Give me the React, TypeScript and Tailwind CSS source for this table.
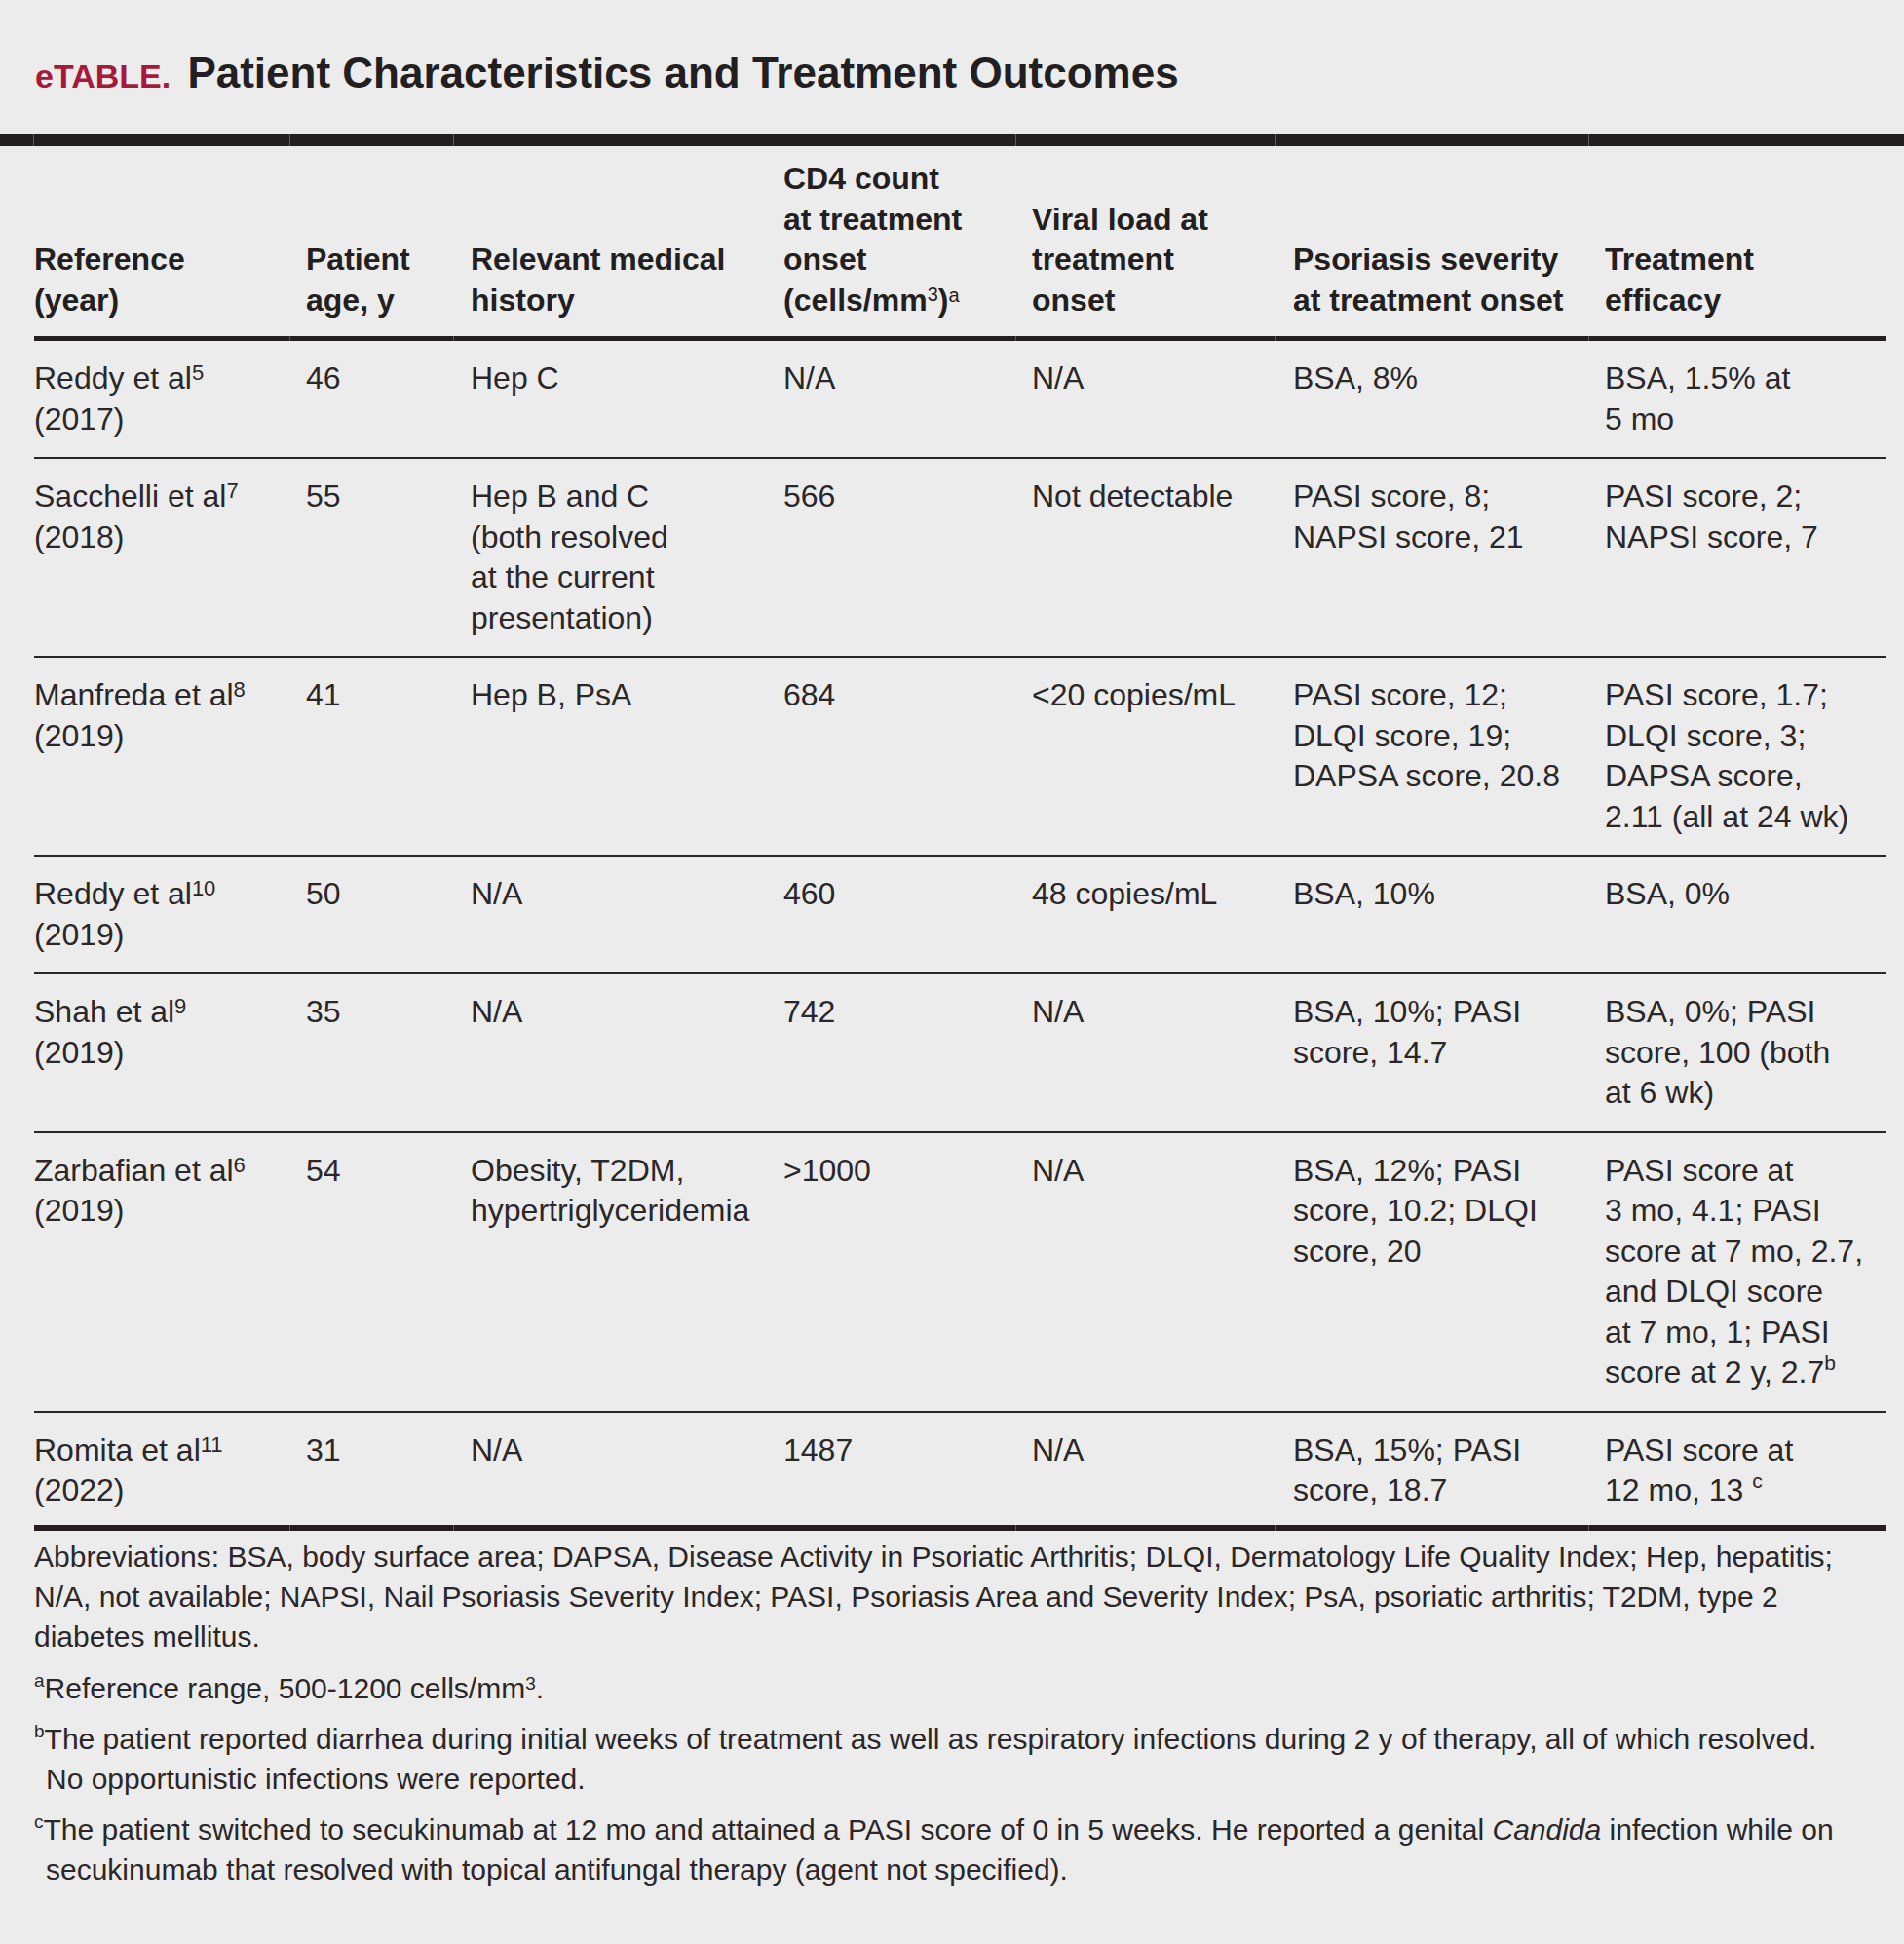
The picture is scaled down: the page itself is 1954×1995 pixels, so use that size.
import React from "react";
import clsx from "clsx";

type Line = React.ReactNode;

function Sup({ children, className }: { children: React.ReactNode; className?: string }) {
  return <sup className={clsx("font-normal", className)}>{children}</sup>;
}

// body superscripts
const Ref = ({ n }: { n: string }) => <Sup className="text-[22px] top-[-0.4em]">{n}</Sup>;
const Note = ({ n }: { n: string }) => <Sup className="text-[21px] top-[-0.6em]">{n}</Sup>;

const headers: Line[][] = [
  ["Reference", "(year)"],
  ["Patient", "age, y"],
  ["Relevant medical", "history"],
  [
    "CD4 count",
    "at treatment",
    "onset",
    <>
      (cells/mm<Sup className="text-[20px] top-[-0.5em]">3</Sup>)
      <Sup className="text-[20px] top-[-0.45em]">a</Sup>
    </>,
  ],
  ["Viral load at", "treatment", "onset"],
  ["Psoriasis severity", "at treatment onset"],
  ["Treatment", "efficacy"],
];

const rows: Line[][][] = [
  [
    [<>Reddy et al<Ref n="5" /></>, "(2017)"],
    ["46"],
    ["Hep C"],
    ["N/A"],
    ["N/A"],
    ["BSA, 8%"],
    ["BSA, 1.5% at", "5 mo"],
  ],
  [
    [<>Sacchelli et al<Ref n="7" /></>, "(2018)"],
    ["55"],
    ["Hep B and C", "(both resolved", "at the current", "presentation)"],
    ["566"],
    ["Not detectable"],
    ["PASI score, 8;", "NAPSI score, 21"],
    ["PASI score, 2;", "NAPSI score, 7"],
  ],
  [
    [<>Manfreda et al<Ref n="8" /></>, "(2019)"],
    ["41"],
    ["Hep B, PsA"],
    ["684"],
    ["<20 copies/mL"],
    ["PASI score, 12;", "DLQI score, 19;", "DAPSA score, 20.8"],
    ["PASI score, 1.7;", "DLQI score, 3;", "DAPSA score,", "2.11 (all at 24 wk)"],
  ],
  [
    [<>Reddy et al<Ref n="10" /></>, "(2019)"],
    ["50"],
    ["N/A"],
    ["460"],
    ["48 copies/mL"],
    ["BSA, 10%"],
    ["BSA, 0%"],
  ],
  [
    [<>Shah et al<Ref n="9" /></>, "(2019)"],
    ["35"],
    ["N/A"],
    ["742"],
    ["N/A"],
    ["BSA, 10%; PASI", "score, 14.7"],
    ["BSA, 0%; PASI", "score, 100 (both", "at 6 wk)"],
  ],
  [
    [<>Zarbafian et al<Ref n="6" /></>, "(2019)"],
    ["54"],
    ["Obesity, T2DM,", "hypertriglyceridemia"],
    [">1000"],
    ["N/A"],
    ["BSA, 12%; PASI", "score, 10.2; DLQI", "score, 20"],
    [
      "PASI score at",
      "3 mo, 4.1; PASI",
      "score at 7 mo, 2.7,",
      "and DLQI score",
      "at 7 mo, 1; PASI",
      <>score at 2 y, 2.7<Note n="b" /></>,
    ],
  ],
  [
    [<>Romita et al<Ref n="11" /></>, "(2022)"],
    ["31"],
    ["N/A"],
    ["1487"],
    ["N/A"],
    ["BSA, 15%; PASI", "score, 18.7"],
    ["PASI score at", <>12 mo, 13 <Note n="c" /></>],
  ],
];

const grid = "grid grid-cols-[279px_169px_321px_255px_268px_320px_289px]";

// thick rules carry a faint seam at the column boundaries, as in the print
function Rule({ h, full }: { h: string; full?: boolean }) {
  const seg = "bg-[#231f20]";
  return (
    <div className={clsx("flex gap-px bg-[#5f5b5c]", h)}>
      {full && <div className={clsx(seg, "w-[34px]")} />}
      <div className={clsx(seg, "w-[262px]")} />
      <div className={clsx(seg, "w-[167px]")} />
      <div className={clsx(seg, "w-[576px]")} />
      <div className={clsx(seg, "w-[265px]")} />
      <div className={clsx(seg, "w-[321px]")} />
      <div className={clsx(seg, "flex-1")} />
    </div>
  );
}

function Cell({ lines }: { lines: Line[] }) {
  return (
    <div>
      {lines.map((l, i) => (
        <div key={i} className="whitespace-nowrap">
          {l}
        </div>
      ))}
    </div>
  );
}

const FootSup = ({ n }: { n: string }) => <Sup className="text-[19px] top-[-0.6em]">{n}</Sup>;

export default function App() {
  return (
    <div className="min-h-screen bg-[#ececec] text-[#231f20] font-['Liberation_Sans',Arial,sans-serif]">
      <h1 className="pl-[36px] pt-[53px] text-[44px] leading-[44px] font-bold whitespace-nowrap">
        <span className="mr-[5px] text-[34px] text-[#a7193a]">eTABLE.</span> Patient Characteristics and
        Treatment Outcomes
      </h1>

      <div className="mt-[38px]">
        <Rule h="h-[12px]" full />
      </div>

      <div className="ml-[35px] w-[1901px]">
        <div className={clsx(grid, "items-end pt-[13px] pb-[16px] text-[32px] leading-[41.5px] font-bold")}>
          {headers.map((h, i) => (
            <Cell key={i} lines={h} />
          ))}
        </div>
        <Rule h="h-[5px]" />

        {rows.map((r, ri) => (
          <div key={ri}>
            {ri > 0 && <div className="h-[2px] bg-[#2b2728]" />}
            <div
              className={clsx(
                grid,
                "pt-[18px] text-[32px] leading-[41.5px] text-[#2b2728]",
                ri === rows.length - 1 ? "pb-[14px]" : "pb-[18px]"
              )}
            >
              {r.map((c, ci) => (
                <Cell key={ci} lines={c} />
              ))}
            </div>
          </div>
        ))}
        <Rule h="h-[6px]" />

        <div className="mt-[6px] text-[30px] leading-[41px] text-[#2b2728]">
          <p className="whitespace-nowrap">
            Abbreviations: BSA, body surface area; DAPSA, Disease Activity in Psoriatic Arthritis; DLQI, Dermatology
            Life Quality Index; Hep, hepatitis;
            <br />
            N/A, not available; NAPSI, Nail Psoriasis Severity Index; PASI, Psoriasis Area and Severity Index; PsA,
            psoriatic arthritis; T2DM, type 2
            <br />
            diabetes mellitus.
          </p>
          <p className="mt-[12px] whitespace-nowrap">
            <FootSup n="a" />
            Reference range, 500-1200 cells/mm<Sup className="text-[19px] top-[-0.45em]">3</Sup>.
          </p>
          <p className="mt-[11px] whitespace-nowrap pl-[12px] indent-[-12px]">
            <FootSup n="b" />
            The patient reported diarrhea during initial weeks of treatment as well as respiratory infections during
            2 y of therapy, all of which resolved.
            <br />
            No opportunistic infections were reported.
          </p>
          <p className="mt-[11px] whitespace-nowrap pl-[12px] indent-[-12px]">
            <FootSup n="c" />
            The patient switched to secukinumab at 12 mo and attained a PASI score of 0 in 5 weeks. He reported a
            genital <i>Candida</i> infection while on
            <br />
            secukinumab that resolved with topical antifungal therapy (agent not specified).
          </p>
        </div>
      </div>
    </div>
  );
}
